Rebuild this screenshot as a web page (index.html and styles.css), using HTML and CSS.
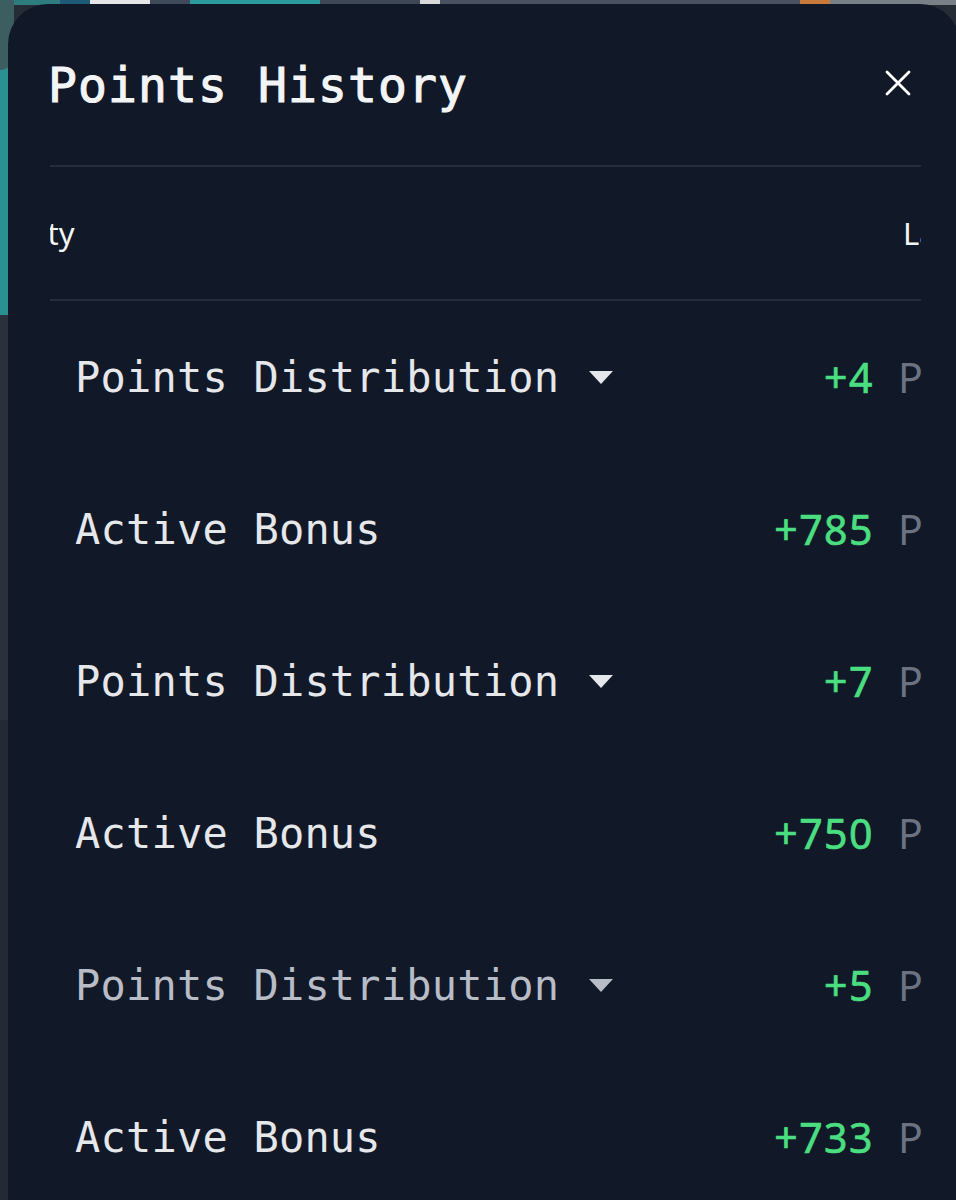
FILE: index.html
```html
<!DOCTYPE html>
<html lang="en">
<head>
<meta charset="utf-8">
<title>Points History</title>
<link rel="stylesheet" href="styles.css">
</head>
<body>
<div class="backdrop-blob"></div>
<section class="panel">
  <header class="panel-header">
    <h1 class="panel-title">Points History</h1>
    <button class="close-btn" aria-label="Close">
      <svg width="26" height="26" viewBox="0 0 26 26"><path d="M2 2 L24 24 M24 2 L2 24" stroke="#ffffff" stroke-width="2.8" stroke-linecap="round" fill="none"/></svg>
    </button>
  </header>
  <div class="table">
    <div class="thead">
      <span class="th th-left">Activity</span>
      <span class="th th-right">Last</span>
    </div>
    <div class="row">
      <div class="cell-label">Points Distribution<span class="caret"></span></div>
      <div class="cell-value"><span class="amount">+4</span><span class="unit">Pts</span></div>
    </div>
    <div class="row">
      <div class="cell-label">Active Bonus</div>
      <div class="cell-value"><span class="amount">+785</span><span class="unit">Pts</span></div>
    </div>
    <div class="row">
      <div class="cell-label">Points Distribution<span class="caret"></span></div>
      <div class="cell-value"><span class="amount">+7</span><span class="unit">Pts</span></div>
    </div>
    <div class="row">
      <div class="cell-label">Active Bonus</div>
      <div class="cell-value"><span class="amount">+750</span><span class="unit">Pts</span></div>
    </div>
    <div class="row row-dim">
      <div class="cell-label">Points Distribution<span class="caret"></span></div>
      <div class="cell-value"><span class="amount">+5</span><span class="unit">Pts</span></div>
    </div>
    <div class="row">
      <div class="cell-label">Active Bonus</div>
      <div class="cell-value"><span class="amount">+733</span><span class="unit">Pts</span></div>
    </div>
  </div>
</section>
</body>
</html>
```

FILE: styles.css
```css
html, body {
  margin: 0;
  height: 1200px;
  overflow: hidden;
}

body {
  position: relative;
  background-color: #262c36;
  background-image:
    linear-gradient(to right, #2f7c7e 0 60px, #1e5a78 60px 90px, #e6e6e6 90px 150px, #3e4a5a 150px 190px, #2a9a9c 190px 320px, #3e4756 320px 420px, #d9d9d9 420px 440px, #4a5260 440px 800px, #c77a3a 800px 830px, #7a8088 830px),
    linear-gradient(to bottom, #2a9190 0 315px, #2a313c 315px 720px, #232a34 720px);
  background-size: 100% 5px, 8px 100%;
  background-repeat: no-repeat, no-repeat;
  font-family: "DejaVu Sans Mono", monospace;
}

.backdrop-blob {
  position: absolute;
  left: -20px;
  top: -10px;
  width: 34px;
  height: 80px;
  border-radius: 0 0 14px 0;
  background: #3c5e60;
}

.panel {
  position: relative;
  margin: 4px 0 0 8px;
  width: 952px;
  height: 1196px;
  box-sizing: border-box;
  padding: 0 39px 0 42px;
  background: #111827;
  border-radius: 40px 40px 0 0;
  overflow: hidden;
}

.panel-header {
  height: 161px;
  display: flex;
  align-items: center;
  justify-content: space-between;
  border-bottom: 2px solid #252d3a;
}

.panel-title {
  margin: 0 0 0 -2px;
  font-family: "DejaVu Sans Mono", monospace;
  font-weight: 400;
  font-size: 48px;
  color: #f3f4f6;
  letter-spacing: 1.1px;
  -webkit-text-stroke: 1.1px #f3f4f6;
}

.close-btn {
  margin: -3px 10px 0 0;
  padding: 0;
  border: 0;
  background: transparent;
  width: 26px;
  height: 26px;
  display: flex;
}

.table {
  overflow: hidden;
}

.thead {
  width: 910px;
  height: 132px;
  display: flex;
  align-items: center;
  border-bottom: 2px solid #252d3a;
  font-family: "Noto Sans", sans-serif;
  font-size: 31px;
  color: #f3f4f6;
  white-space: nowrap;
}

.th-left {
  margin-left: -80px;
}

.th-right {
  margin-left: auto;
  width: 57px;
}

.row {
  width: 910px;
  height: 152px;
  display: flex;
  align-items: center;
  justify-content: space-between;
  box-sizing: border-box;
  padding-left: 25px;
  white-space: nowrap;
}

.cell-label {
  display: flex;
  align-items: center;
  font-size: 42px;
  letter-spacing: 0.2px;
  color: #e5e7eb;
}

.row-dim .cell-label {
  color: #b7bcc6;
}

.caret {
  margin-left: 30px;
  width: 0;
  height: 0;
  border-left: 12px solid transparent;
  border-right: 12px solid transparent;
  border-top: 13px solid currentColor;
}

.cell-value {
  display: flex;
  align-items: baseline;
  gap: 24px;
  font-family: "Noto Sans", sans-serif;
  font-size: 41px;
}

.amount {
  color: #4ade80;
  letter-spacing: 1.5px;
  -webkit-text-stroke: 0.7px #4ade80;
}

.unit {
  color: #6b7280;
  width: 62px;
}
```
